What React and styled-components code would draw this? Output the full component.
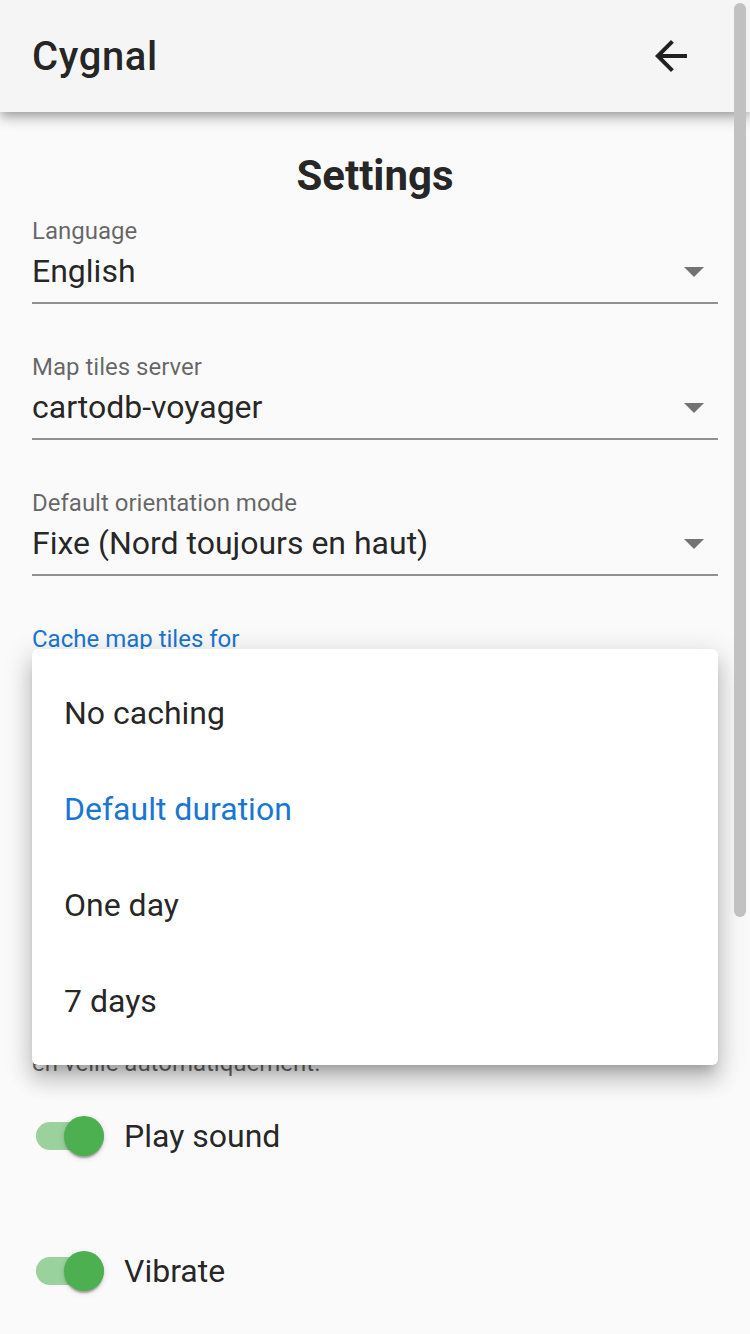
import React from "react";
import styled, { createGlobalStyle } from "styled-components";

const GlobalStyle = createGlobalStyle`
  html, body {
    margin: 0;
    padding: 0;
    background: #fafafa;
    overflow: hidden;
    font-family: Roboto, "Liberation Sans", sans-serif;
    color: rgba(0, 0, 0, 0.87);
  }
`;

const Page = styled.div`
  position: relative;
  width: 750px;
  min-height: 1334px;
  background: #fafafa;
`;

const AppBar = styled.header`
  position: relative;
  z-index: 2;
  height: 112px;
  display: flex;
  align-items: center;
  justify-content: space-between;
  padding: 0 32px;
  background: #f5f5f5;
  box-shadow: 0 4px 8px -2px rgba(0, 0, 0, 0.2), 0 8px 10px 0 rgba(0, 0, 0, 0.14),
    0 2px 20px 0 rgba(0, 0, 0, 0.12);
`;

const Title = styled.h1`
  margin: 0;
  font-size: 40px;
  font-weight: 500;
  letter-spacing: 0.6px;
`;

const IconButton = styled.button`
  width: 48px;
  height: 48px;
  margin-right: 23px;
  padding: 0;
  border: 0;
  background: none;
  display: flex;
  color: #212121;
`;

const Main = styled.main`
  padding: 40px 32px 0;
`;

const Heading = styled.h2`
  margin: 0 0 19px;
  text-align: center;
  font-size: 42px;
  line-height: 48px;
  font-weight: 700;
`;

const Field = styled.div`
  position: relative;
  margin-bottom: 51px;
`;

const Label = styled.div`
  font-size: 24px;
  line-height: 24px;
  color: ${(p) => (p.$focused ? "#1976d2" : "rgba(0, 0, 0, 0.6)")};
`;

const Select = styled.div`
  margin-top: 8px;
  display: flex;
  align-items: center;
  justify-content: space-between;
  padding-bottom: 11px;
  border-bottom: 2px solid rgba(0, 0, 0, 0.42);
`;

const Value = styled.span`
  font-size: 32px;
  line-height: 40px;
`;

const Caret = styled.svg`
  width: 48px;
  height: 48px;
  margin: -4px 0;
  fill: rgba(0, 0, 0, 0.54);
`;

const Menu = styled.ul`
  position: absolute;
  z-index: 3;
  top: 22px;
  left: 0;
  right: 0;
  margin: 0;
  padding: 16px 0;
  list-style: none;
  background: #fff;
  border-radius: 6px;
  box-shadow: 0 10px 10px -6px rgba(0, 0, 0, 0.2), 0 16px 20px 2px rgba(0, 0, 0, 0.14),
    0 6px 28px 4px rgba(0, 0, 0, 0.12);
`;

const MenuItem = styled.li`
  height: 96px;
  display: flex;
  align-items: center;
  padding: 0 32px;
  font-size: 32px;
  color: ${(p) => (p.$selected ? "#1976d2" : "rgba(0, 0, 0, 0.87)")};
`;

const SwitchRow = styled.label`
  height: 76px;
  display: flex;
  align-items: center;
  margin-top: ${(p) => p.$gap}px;
  font-size: 32px;
`;

const Switch = styled.span`
  position: relative;
  width: 72px;
  height: 40px;
  margin: 0 16px 0 4px;
  flex: none;

  &::before {
    content: "";
    position: absolute;
    left: 0;
    top: 6px;
    width: 68px;
    height: 28px;
    border-radius: 14px;
    background: #4caf50;
    opacity: 0.55;
  }

  &::after {
    content: "";
    position: absolute;
    left: 28px;
    top: 0;
    width: 40px;
    height: 40px;
    border-radius: 50%;
    background: #4caf50;
    box-shadow: 0 4px 2px -2px rgba(0, 0, 0, 0.2), 0 2px 2px 0 rgba(0, 0, 0, 0.14),
      0 2px 6px 0 rgba(0, 0, 0, 0.12);
  }
`;

const Helper = styled.p`
  margin: 3px 0 15px;
  font-size: 24px;
  line-height: 40px;
  color: rgba(0, 0, 0, 0.6);
`;

const ScrollThumb = styled.div`
  position: fixed;
  z-index: 5;
  top: 3px;
  left: 734px;
  width: 12px;
  height: 914px;
  border-radius: 6px;
  background: #c1c1c1;
`;

const selects = [
  { label: "Language", value: "English" },
  { label: "Map tiles server", value: "cartodb-voyager" },
  { label: "Default orientation mode", value: "Fixe (Nord toujours en haut)" },
];

const cacheOptions = ["No caching", "Default duration", "One day", "7 days"];

function DropIcon() {
  return (
    <Caret viewBox="0 0 24 24">
      <path d="M7 10l5 5 5-5z" />
    </Caret>
  );
}

export default function App() {
  return (
    <Page>
      <GlobalStyle />
      <AppBar>
        <Title>Cygnal</Title>
        <IconButton aria-label="back">
          <svg width="48" height="48" viewBox="0 0 24 24" fill="currentColor">
            <path d="M20 11H7.83l5.59-5.59L12 4l-8 8 8 8 1.41-1.41L7.83 13H20v-2z" />
          </svg>
        </IconButton>
      </AppBar>
      <Main>
        <Heading>Settings</Heading>
        {selects.map((s) => (
          <Field key={s.label}>
            <Label>{s.label}</Label>
            <Select>
              <Value>{s.value}</Value>
              <DropIcon />
            </Select>
          </Field>
        ))}
        <Field>
          <Label $focused>Cache map tiles for</Label>
          <Select>
            <Value>Default duration</Value>
            <DropIcon />
          </Select>
          <Menu>
            {cacheOptions.map((o) => (
              <MenuItem key={o} $selected={o === "Default duration"}>
                {o}
              </MenuItem>
            ))}
          </Menu>
        </Field>
        <SwitchRow $gap={212}>
          <Switch />
          Keep screen on
        </SwitchRow>
        <Helper>
          Empêche l'écran de se mettre
          <br />
          en veille automatiquement.
        </Helper>
        <SwitchRow $gap={0}>
          <Switch />
          Play sound
        </SwitchRow>
        <SwitchRow $gap={59}>
          <Switch />
          Vibrate
        </SwitchRow>
      </Main>
      <ScrollThumb />
    </Page>
  );
}
